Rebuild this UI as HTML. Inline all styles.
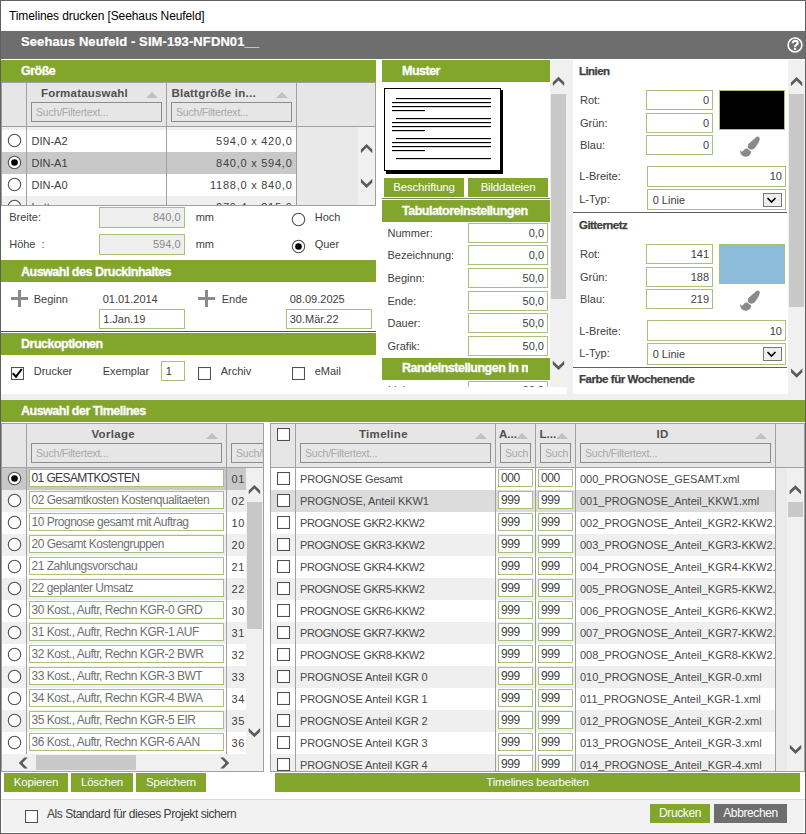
<!DOCTYPE html><html><head><meta charset="utf-8"><style>

html,body{margin:0;padding:0}
body{width:806px;height:834px;position:relative;overflow:hidden;background:#fff;font-family:"Liberation Sans",sans-serif;}
div,svg{position:absolute;box-sizing:content-box}
.x{white-space:nowrap}

</style></head><body>
<div class="x" style="left:9px;top:10px;font-size:12px;line-height:12px;letter-spacing:-0.1px;color:#000;">Timelines drucken [Seehaus Neufeld]</div>
<div style="left:1px;top:31px;width:804px;height:28px;background:#6e6e6e;"></div>
<div class="x" style="left:21px;top:35px;font-size:13px;line-height:13px;font-weight:bold;letter-spacing:0.1px;color:#fff;-webkit-text-stroke:0.2px #fff;">Seehaus Neufeld - SIM-193-NFDN01__</div>
<svg style="left:787px;top:37px" width="16" height="16"><circle cx="8" cy="8" r="6.9" fill="none" stroke="#fff" stroke-width="1.5"/><path d="M5.7 6.3 C5.7 4.6 6.8 3.9 8.1 3.9 C9.6 3.9 10.7 4.8 10.7 6 C10.7 7.3 9.7 7.7 9 8.2 C8.3 8.7 8 9.2 8 10.3" fill="none" stroke="#fff" stroke-width="2.1"/><rect x="6.9" y="11.1" width="2.2" height="1.8" fill="#fff"/></svg>
<div style="left:1px;top:60px;width:375px;height:22px;background:#82a62c;"></div>
<div class="x" style="left:21px;top:65px;font-size:12.5px;line-height:12.5px;font-weight:bold;letter-spacing:-0.5px;color:#fff;-webkit-text-stroke:0.3px #fff;">Größe</div>
<div style="left:2px;top:82px;width:374px;height:124px;background:#e9e9e9;"></div>
<div style="left:2px;top:82px;width:373px;height:44px;background:#e6e6e6;"></div>
<div style="left:1px;top:82px;width:375px;height:1px;background:#a0a0a0;"></div>
<div style="left:1px;top:82px;width:1px;height:124px;background:#a0a0a0;"></div>
<div style="left:1px;top:126px;width:375px;height:1px;background:#a0a0a0;"></div>
<div style="left:1px;top:205px;width:375px;height:1px;background:#a0a0a0;"></div>
<div style="left:375px;top:82px;width:1px;height:124px;background:#a0a0a0;"></div>
<div style="left:358px;top:127px;width:17px;height:78px;background:#f0f0f0;"></div>
<div style="left:2px;top:127px;width:294px;height:78px;overflow:hidden">
<div style="left:0;top:0px;width:294px;height:3px;background:#efefef"></div>
<div style="left:0;top:3px;width:294px;height:22px;background:#fff"></div>
<div class="x" style="left:29.5px;top:9px;font-size:11px;line-height:11px;color:#404040">DIN-A2</div>
<div class="x" style="right:3.5px;top:9px;font-size:11px;line-height:11px;color:#404040;letter-spacing:0.75px">594,0 x 420,0</div>
<svg style="left:5px;top:6px" width="15" height="15"><circle cx="7.5" cy="7.5" r="6.2" fill="#fff" stroke="#505050" stroke-width="1.1"/></svg>
<div style="left:0;top:25px;width:294px;height:22px;background:#c8c8c8"></div>
<div class="x" style="left:29.5px;top:31px;font-size:11px;line-height:11px;color:#404040">DIN-A1</div>
<div class="x" style="right:3.5px;top:31px;font-size:11px;line-height:11px;color:#404040;letter-spacing:0.75px">840,0 x 594,0</div>
<svg style="left:5px;top:28px" width="15" height="15"><circle cx="7.5" cy="7.5" r="6.2" fill="#fff" stroke="#505050" stroke-width="1.1"/><circle cx="7.5" cy="7.5" r="3.3" fill="#000"/></svg>
<div style="left:0;top:47px;width:294px;height:22px;background:#fff"></div>
<div class="x" style="left:29.5px;top:53px;font-size:11px;line-height:11px;color:#404040">DIN-A0</div>
<div class="x" style="right:3.5px;top:53px;font-size:11px;line-height:11px;color:#404040;letter-spacing:0.75px">1188,0 x 840,0</div>
<svg style="left:5px;top:50px" width="15" height="15"><circle cx="7.5" cy="7.5" r="6.2" fill="#fff" stroke="#505050" stroke-width="1.1"/></svg>
<div style="left:0;top:69px;width:294px;height:22px;background:#efefef"></div>
<div class="x" style="left:29.5px;top:75px;font-size:11px;line-height:11px;color:#404040">Letter</div>
<div class="x" style="right:3.5px;top:75px;font-size:11px;line-height:11px;color:#404040;letter-spacing:0.75px">279,4 x 215,9</div>
<svg style="left:5px;top:72px" width="15" height="15"><circle cx="7.5" cy="7.5" r="6.2" fill="#fff" stroke="#505050" stroke-width="1.1"/></svg>
</div>
<div style="left:26px;top:82px;width:1px;height:123px;background:#a0a0a0;"></div>
<div style="left:166px;top:82px;width:1px;height:123px;background:#a0a0a0;"></div>
<div style="left:296px;top:82px;width:1px;height:123px;background:#a0a0a0;"></div>
<div class="x" style="left:41px;top:88px;font-size:11.5px;line-height:11.5px;font-weight:bold;letter-spacing:0.2px;color:#505050;">Formatauswahl</div>
<svg style="left:146px;top:92px" width="12" height="6"><path d="M0 6 L6 0 L12 6 Z" fill="#c0c0c0"/></svg>
<div class="x" style="left:171.4px;top:88px;font-size:11.5px;line-height:11.5px;font-weight:bold;letter-spacing:0.25px;color:#505050;">Blattgröße in...</div>
<svg style="left:276px;top:92px" width="12" height="6"><path d="M0 6 L6 0 L12 6 Z" fill="#c0c0c0"/></svg>
<div style="left:31px;top:102px;width:129px;height:18px;border:1px solid #8c8c8c;background:#e6e6e6;overflow:hidden"><div class="x" style="left:4px;top:4px;font-size:10.5px;line-height:10.5px;color:#a8a8a8;letter-spacing:-0.2px">Such/Filtertext...</div></div>
<div style="left:171px;top:102px;width:119px;height:18px;border:1px solid #8c8c8c;background:#e6e6e6;overflow:hidden"><div class="x" style="left:4px;top:4px;font-size:10.5px;line-height:10.5px;color:#a8a8a8;letter-spacing:-0.2px">Such/Filtertext...</div></div>
<svg style="left:0;top:0" width="806" height="834"><polygon points="366.60,143.90 372.30,149.50 372.30,153.20 366.60,147.60 360.90,153.20 360.90,149.50" fill="#5a5a5a"/></svg>
<svg style="left:0;top:0" width="806" height="834"><polygon points="366.60,188.00 372.30,182.40 372.30,178.70 366.60,184.30 360.90,178.70 360.90,182.40" fill="#5a5a5a"/></svg>
<div class="x" style="left:9.2px;top:212px;font-size:11px;line-height:11px;color:#404040;">Breite:</div>
<div style="left:99px;top:207px;width:84px;height:19px;border:1px solid #a6c27a;background:#efefef;"></div>
<div class="x" style="right:625.5px;top:212px;font-size:11px;line-height:11px;color:#888;">840,0</div>
<div class="x" style="left:195.7px;top:212px;font-size:11px;line-height:11px;color:#404040;">mm</div>
<svg style="left:291px;top:212px" width="15" height="15"><circle cx="7.5" cy="7.5" r="6.2" fill="#fff" stroke="#505050" stroke-width="1.1"/></svg>
<div class="x" style="left:314.7px;top:212px;font-size:11px;line-height:11px;color:#404040;">Hoch</div>
<div class="x" style="left:9.2px;top:239px;font-size:11px;line-height:11px;color:#404040;">Höhe&nbsp; :</div>
<div style="left:99px;top:234px;width:84px;height:19px;border:1px solid #a6c27a;background:#efefef;"></div>
<div class="x" style="right:625.5px;top:239px;font-size:11px;line-height:11px;color:#888;">594,0</div>
<div class="x" style="left:195.7px;top:239px;font-size:11px;line-height:11px;color:#404040;">mm</div>
<svg style="left:291px;top:239px" width="15" height="15"><circle cx="7.5" cy="7.5" r="6.2" fill="#fff" stroke="#505050" stroke-width="1.1"/><circle cx="7.5" cy="7.5" r="3.3" fill="#000"/></svg>
<div class="x" style="left:314.7px;top:239px;font-size:11px;line-height:11px;color:#404040;">Quer</div>
<div style="left:1px;top:260px;width:375px;height:22px;background:#82a62c;"></div>
<div class="x" style="left:21px;top:266px;font-size:12.5px;line-height:12.5px;font-weight:bold;letter-spacing:-0.5px;color:#fff;-webkit-text-stroke:0.3px #fff;">Auswahl des Druckinhaltes</div>
<svg style="left:11px;top:290px" width="18" height="18"><rect x="0" y="7" width="17" height="3" fill="#8a8a8a"/><rect x="7" y="0" width="3" height="17" fill="#8a8a8a"/></svg>
<div class="x" style="left:33.7px;top:294px;font-size:11px;line-height:11px;color:#404040;">Beginn</div>
<div class="x" style="left:102.7px;top:294px;font-size:11px;line-height:11px;color:#404040;">01.01.2014</div>
<div style="left:99px;top:309px;width:84px;height:18px;border:1px solid #a6c27a;background:#fff;"></div>
<div class="x" style="left:103.2px;top:314px;font-size:11px;line-height:11px;color:#404040;">1.Jan.19</div>
<svg style="left:198px;top:290px" width="18" height="18"><rect x="0" y="7" width="17" height="3" fill="#8a8a8a"/><rect x="7" y="0" width="3" height="17" fill="#8a8a8a"/></svg>
<div class="x" style="left:221.7px;top:294px;font-size:11px;line-height:11px;color:#404040;">Ende</div>
<div class="x" style="left:289.7px;top:294px;font-size:11px;line-height:11px;color:#404040;">08.09.2025</div>
<div style="left:286px;top:309px;width:84px;height:18px;border:1px solid #a6c27a;background:#fff;"></div>
<div class="x" style="left:289.7px;top:314px;font-size:11px;line-height:11px;color:#404040;">30.Mär.22</div>
<div style="left:1px;top:331px;width:375px;height:1px;background:#505050;"></div>
<div style="left:1px;top:333px;width:375px;height:22px;background:#82a62c;"></div>
<div class="x" style="left:21px;top:338px;font-size:12.5px;line-height:12.5px;font-weight:bold;letter-spacing:-0.5px;color:#fff;-webkit-text-stroke:0.3px #fff;">Druckoptionen</div>
<svg style="left:11px;top:367px" width="13" height="13"><rect x="0.5" y="0.5" width="12" height="12" fill="#fff" stroke="#505050" stroke-width="1.1"/><path d="M1.8 6.2 L5 9.6 L10.8 2" fill="none" stroke="#000" stroke-width="2"/></svg>
<div class="x" style="left:33.7px;top:366px;font-size:11px;line-height:11px;color:#404040;">Drucker</div>
<div class="x" style="left:102.7px;top:366px;font-size:11px;line-height:11px;color:#404040;">Exemplar</div>
<div style="left:161px;top:361px;width:22px;height:18px;border:1px solid #a6c27a;background:#fff;"></div>
<div class="x" style="left:165.7px;top:366px;font-size:11px;line-height:11px;color:#404040;">1</div>
<svg style="left:198px;top:367px" width="13" height="13"><rect x="0.5" y="0.5" width="12" height="12" fill="#fff" stroke="#505050" stroke-width="1.1"/></svg>
<div class="x" style="left:220.7px;top:366px;font-size:11px;line-height:11px;color:#404040;">Archiv</div>
<svg style="left:292px;top:367px" width="13" height="13"><rect x="0.5" y="0.5" width="12" height="12" fill="#fff" stroke="#505050" stroke-width="1.1"/></svg>
<div class="x" style="left:314.7px;top:366px;font-size:11px;line-height:11px;color:#404040;">eMail</div>
<div style="left:382px;top:60px;width:168px;height:327px;background:#fff;"></div>
<div style="left:382px;top:60px;width:168px;height:22px;background:#82a62c;"></div>
<div class="x" style="left:402px;top:65px;font-size:12.5px;line-height:12.5px;font-weight:bold;letter-spacing:-0.5px;color:#fff;-webkit-text-stroke:0.3px #fff;">Muster</div>
<svg style="left:384px;top:88px" width="120" height="86"><rect x="2" y="2" width="117" height="84" fill="#000"/><rect x="0.5" y="0.5" width="116" height="82" fill="#fff" stroke="#000"/><rect x="12" y="10" width="95" height="1.15" fill="#000"/><rect x="8" y="14" width="99" height="1.15" fill="#000"/><rect x="8" y="18" width="99" height="1.15" fill="#000"/><rect x="8" y="22" width="33" height="1.15" fill="#000"/><rect x="12" y="30" width="95" height="1.15" fill="#000"/><rect x="8" y="34" width="99" height="1.15" fill="#000"/><rect x="8" y="38" width="99" height="1.15" fill="#000"/><rect x="8" y="42" width="33" height="1.15" fill="#000"/><rect x="12" y="50" width="95" height="1.15" fill="#000"/><rect x="8" y="54" width="99" height="1.15" fill="#000"/><rect x="8" y="58" width="99" height="1.15" fill="#000"/><rect x="8" y="62" width="33" height="1.15" fill="#000"/><rect x="12" y="70" width="95" height="1.15" fill="#000"/></svg>
<div style="left:384px;top:178px;width:80px;height:19px;background:#82a62c"></div>
<div class="x" style="left:384px;width:80px;text-align:center;top:182px;font-size:11.5px;line-height:11.5px;color:#fff;letter-spacing:-0.2px">Beschriftung</div>
<div style="left:468px;top:178px;width:80px;height:19px;background:#82a62c"></div>
<div class="x" style="left:468px;width:80px;text-align:center;top:182px;font-size:11.5px;line-height:11.5px;color:#fff;letter-spacing:-0.2px">Bilddateien</div>
<div style="left:382px;top:198px;width:168px;height:1px;background:#808080;"></div>
<div style="left:382px;top:200px;width:168px;height:22px;background:#82a62c;overflow:hidden"></div>
<div class="x" style="left:402px;top:205px;font-size:12.5px;line-height:12.5px;font-weight:bold;letter-spacing:-0.5px;color:#fff;-webkit-text-stroke:0.3px #fff;">Tabulatoreinstellungen</div>
<div class="x" style="left:387.5px;top:228px;font-size:11px;line-height:11px;color:#404040;">Nummer:</div>
<div style="left:468px;top:223px;width:78px;height:18px;border:1px solid #a6c27a;background:#fff;"></div>
<div class="x" style="right:262px;top:228px;font-size:11px;line-height:11px;color:#404040;">0,0</div>
<div class="x" style="left:387.5px;top:250px;font-size:11px;line-height:11px;color:#404040;">Bezeichnung:</div>
<div style="left:468px;top:245px;width:78px;height:18px;border:1px solid #a6c27a;background:#fff;"></div>
<div class="x" style="right:262px;top:250px;font-size:11px;line-height:11px;color:#404040;">0,0</div>
<div class="x" style="left:387.5px;top:273px;font-size:11px;line-height:11px;color:#404040;">Beginn:</div>
<div style="left:468px;top:268px;width:78px;height:18px;border:1px solid #a6c27a;background:#fff;"></div>
<div class="x" style="right:262px;top:273px;font-size:11px;line-height:11px;color:#404040;">50,0</div>
<div class="x" style="left:387.5px;top:296px;font-size:11px;line-height:11px;color:#404040;">Ende:</div>
<div style="left:468px;top:291px;width:78px;height:18px;border:1px solid #a6c27a;background:#fff;"></div>
<div class="x" style="right:262px;top:296px;font-size:11px;line-height:11px;color:#404040;">50,0</div>
<div class="x" style="left:387.5px;top:318px;font-size:11px;line-height:11px;color:#404040;">Dauer:</div>
<div style="left:468px;top:313px;width:78px;height:18px;border:1px solid #a6c27a;background:#fff;"></div>
<div class="x" style="right:262px;top:318px;font-size:11px;line-height:11px;color:#404040;">50,0</div>
<div class="x" style="left:387.5px;top:341px;font-size:11px;line-height:11px;color:#404040;">Grafik:</div>
<div style="left:468px;top:336px;width:78px;height:18px;border:1px solid #a6c27a;background:#fff;"></div>
<div class="x" style="right:262px;top:341px;font-size:11px;line-height:11px;color:#404040;">50,0</div>
<div style="left:382px;top:358px;width:168px;height:22px;background:#82a62c;overflow:hidden"><div class="x" style="left:20px;top:4px;width:126px;overflow:hidden;font-size:12.5px;line-height:12.5px;font-weight:bold;color:#fff;letter-spacing:-0.5px;-webkit-text-stroke:0.3px #fff">Randeinstellungen in mm</div></div>
<div style="left:382px;top:381px;width:168px;height:6px;overflow:hidden"><div style="left:86px;top:0;width:78px;height:18px;border:1px solid #a6c27a;background:#fff"></div><div class="x" style="left:6px;top:4px;font-size:11px;line-height:11px;color:#404040">Links:</div><div class="x" style="right:6px;top:4px;font-size:11px;line-height:11px;color:#404040">20,0</div></div>
<div style="left:550px;top:60px;width:23px;height:334px;background:#f0f0f0;"></div>
<div style="left:382px;top:387px;width:185px;height:7px;background:#fff;"></div>
<div style="left:551px;top:94px;width:15px;height:205px;background:#c8c8c8;"></div>
<svg style="left:0;top:0" width="806" height="834"><polygon points="558.50,76.70 564.20,82.30 564.20,86.00 558.50,80.40 552.80,86.00 552.80,82.30" fill="#5a5a5a"/></svg>
<svg style="left:0;top:0" width="806" height="834"><polygon points="558.50,370.00 564.20,364.40 564.20,360.70 558.50,366.30 552.80,360.70 552.80,364.40" fill="#5a5a5a"/></svg>
<div style="left:573px;top:60px;width:215px;height:334px;background:#fff;"></div>
<div class="x" style="left:579px;top:66px;font-size:11.5px;line-height:11.5px;font-weight:bold;letter-spacing:-0.55px;color:#404040;-webkit-text-stroke:0.25px #404040;">Linien</div>
<div class="x" style="left:580px;top:95px;font-size:11px;line-height:11px;color:#404040;">Rot:</div>
<div style="left:646px;top:90px;width:65px;height:18px;border:1px solid #a6c27a;background:#fff;"></div>
<div class="x" style="right:97px;top:95px;font-size:11px;line-height:11px;color:#404040;">0</div>
<div class="x" style="left:580px;top:118px;font-size:11px;line-height:11px;color:#404040;">Grün:</div>
<div style="left:646px;top:113px;width:65px;height:18px;border:1px solid #a6c27a;background:#fff;"></div>
<div class="x" style="right:97px;top:118px;font-size:11px;line-height:11px;color:#404040;">0</div>
<div class="x" style="left:580px;top:140px;font-size:11px;line-height:11px;color:#404040;">Blau:</div>
<div style="left:646px;top:135px;width:65px;height:18px;border:1px solid #a6c27a;background:#fff;"></div>
<div class="x" style="right:97px;top:140px;font-size:11px;line-height:11px;color:#404040;">0</div>
<div style="left:719px;top:90px;width:64px;height:38px;border:1px solid #a6c27a;background:#000"></div>
<svg style="left:735px;top:132px" width="30" height="30" viewBox="0 0 30 30"><g fill="#8a8a8a"><path d="M21.3 5.0 C22.5 3.9 24.6 4.3 24.8 6.6 C24.9 9.0 21.5 14.5 19.5 16.5 C17.8 18.2 14.5 18.0 13.2 16.0 C12.3 14.5 12.8 12.5 14.2 11.3 Z"/><path d="M5.0 18.0 C5.8 19.7 7.2 20.0 8.3 18.7 C9.3 17.3 10.6 16.4 12.2 16.5 C13.0 16.6 13.4 17.3 13.9 17.9 C14.5 18.6 15.3 19.0 16.1 19.1 C16.3 21.8 14.6 24.6 11.2 24.7 C7.6 24.8 5.0 22.3 5.0 18.0 Z"/></g></svg>
<div class="x" style="left:579.2px;top:171px;font-size:11px;line-height:11px;color:#404040;">L-Breite:</div>
<div style="left:647px;top:166px;width:137px;height:19px;border:1px solid #a6c27a;background:#fff;"></div>
<div class="x" style="right:24px;top:171px;font-size:11px;line-height:11px;color:#404040;">10</div>
<div class="x" style="left:579.2px;top:194px;font-size:11px;line-height:11px;color:#404040;">L-Typ:</div>
<div style="left:647px;top:189px;width:137px;height:19px;border:1px solid #a6c27a;background:#fff;"></div>
<div class="x" style="left:652.7px;top:195px;font-size:11px;line-height:11px;color:#404040;">0 Linie</div>
<div style="left:763px;top:193px;width:17px;height:12px;border:1px solid #777;background:#efefef"></div><svg style="left:766px;top:197px" width="11" height="7"><path d="M1.5 1 L5.5 5 L9.5 1" fill="none" stroke="#000" stroke-width="1.6"/></svg>
<div style="left:573px;top:212px;width:214px;height:1px;background:#606060;"></div>
<div class="x" style="left:579px;top:220px;font-size:11.5px;line-height:11.5px;font-weight:bold;letter-spacing:-0.55px;color:#404040;-webkit-text-stroke:0.25px #404040;">Gitternetz</div>
<div class="x" style="left:580px;top:249px;font-size:11px;line-height:11px;color:#404040;">Rot:</div>
<div style="left:646px;top:244px;width:65px;height:18px;border:1px solid #a6c27a;background:#fff;"></div>
<div class="x" style="right:97px;top:249px;font-size:11px;line-height:11px;color:#404040;">141</div>
<div class="x" style="left:580px;top:272px;font-size:11px;line-height:11px;color:#404040;">Grün:</div>
<div style="left:646px;top:267px;width:65px;height:18px;border:1px solid #a6c27a;background:#fff;"></div>
<div class="x" style="right:97px;top:272px;font-size:11px;line-height:11px;color:#404040;">188</div>
<div class="x" style="left:580px;top:294px;font-size:11px;line-height:11px;color:#404040;">Blau:</div>
<div style="left:646px;top:289px;width:65px;height:18px;border:1px solid #a6c27a;background:#fff;"></div>
<div class="x" style="right:97px;top:294px;font-size:11px;line-height:11px;color:#404040;">219</div>
<div style="left:719px;top:244px;width:64px;height:38px;border:1px solid #a6c27a;background:#8dbcdb"></div>
<svg style="left:735px;top:286px" width="30" height="30" viewBox="0 0 30 30"><g fill="#8a8a8a"><path d="M21.3 5.0 C22.5 3.9 24.6 4.3 24.8 6.6 C24.9 9.0 21.5 14.5 19.5 16.5 C17.8 18.2 14.5 18.0 13.2 16.0 C12.3 14.5 12.8 12.5 14.2 11.3 Z"/><path d="M5.0 18.0 C5.8 19.7 7.2 20.0 8.3 18.7 C9.3 17.3 10.6 16.4 12.2 16.5 C13.0 16.6 13.4 17.3 13.9 17.9 C14.5 18.6 15.3 19.0 16.1 19.1 C16.3 21.8 14.6 24.6 11.2 24.7 C7.6 24.8 5.0 22.3 5.0 18.0 Z"/></g></svg>
<div class="x" style="left:579.2px;top:326px;font-size:11px;line-height:11px;color:#404040;">L-Breite:</div>
<div style="left:647px;top:320px;width:137px;height:19px;border:1px solid #a6c27a;background:#fff;"></div>
<div class="x" style="right:24px;top:326px;font-size:11px;line-height:11px;color:#404040;">10</div>
<div class="x" style="left:579.2px;top:348px;font-size:11px;line-height:11px;color:#404040;">L-Typ:</div>
<div style="left:647px;top:343px;width:137px;height:20px;border:1px solid #a6c27a;background:#fff;"></div>
<div class="x" style="left:652.7px;top:349px;font-size:11px;line-height:11px;color:#404040;">0 Linie</div>
<div style="left:763px;top:347px;width:17px;height:12px;border:1px solid #777;background:#efefef"></div><svg style="left:766px;top:351px" width="11" height="7"><path d="M1.5 1 L5.5 5 L9.5 1" fill="none" stroke="#000" stroke-width="1.6"/></svg>
<div style="left:573px;top:367px;width:214px;height:1px;background:#606060;"></div>
<div class="x" style="left:579px;top:374px;font-size:11.5px;line-height:11.5px;font-weight:bold;letter-spacing:-0.45px;color:#404040;-webkit-text-stroke:0.25px #404040;">Farbe für Wochenende</div>
<div style="left:788px;top:60px;width:17px;height:334px;background:#f0f0f0;"></div>
<div style="left:789px;top:94px;width:15px;height:213px;background:#c8c8c8;"></div>
<svg style="left:0;top:0" width="806" height="834"><polygon points="796.60,77.00 802.30,82.60 802.30,86.30 796.60,80.70 790.90,86.30 790.90,82.60" fill="#5a5a5a"/></svg>
<svg style="left:0;top:0" width="806" height="834"><polygon points="796.70,377.80 802.40,372.20 802.40,368.50 796.70,374.10 791.00,368.50 791.00,372.20" fill="#5a5a5a"/></svg>
<div style="left:1px;top:394px;width:804px;height:6px;background:#f0f0f0;"></div>
<div style="left:1px;top:400px;width:804px;height:22px;background:#82a62c;"></div>
<div class="x" style="left:21px;top:405px;font-size:12.5px;line-height:12.5px;font-weight:bold;letter-spacing:-0.5px;color:#fff;-webkit-text-stroke:0.3px #fff;">Auswahl der Timelines</div>
<div style="left:2px;top:423px;width:262px;height:349px;background:#f0f0f0;"></div>
<div style="left:2px;top:423px;width:261px;height:44px;background:#e6e6e6;"></div>
<div style="left:1px;top:423px;width:263px;height:1px;background:#a0a0a0;"></div>
<div style="left:1px;top:467px;width:262px;height:1px;background:#a0a0a0;"></div>
<div style="left:263px;top:423px;width:1px;height:349px;background:#a0a0a0;"></div>
<div style="left:1px;top:771px;width:263px;height:1px;background:#a0a0a0;"></div>
<div style="left:1px;top:423px;width:1px;height:349px;background:#a0a0a0;"></div>
<div style="left:2px;top:468px;width:24px;height:22px;background:#c8c8c8;"></div>
<div style="left:27px;top:468px;width:199px;height:22px;background:#c8c8c8;"></div>
<div style="left:227px;top:468px;width:19px;height:22px;background:#c8c8c8;"></div>
<svg style="left:7px;top:471px" width="15" height="15"><circle cx="7.5" cy="7.5" r="6.2" fill="#fff" stroke="#505050" stroke-width="1.1"/><circle cx="7.5" cy="7.5" r="3.3" fill="#000"/></svg>
<div style="left:29px;top:469px;width:193px;height:16px;border:1px solid #a6c27a;background:#fff;"></div>
<div class="x" style="left:31.5px;top:472px;font-size:12px;line-height:12px;letter-spacing:-0.6px;color:#383838;">01 GESAMTKOSTEN</div>
<div class="x" style="left:231.5px;top:474px;font-size:11px;line-height:11px;letter-spacing:0.7px;color:#404040;">01</div>
<div style="left:2px;top:490px;width:24px;height:22px;background:#efefef;"></div>
<div style="left:27px;top:490px;width:199px;height:22px;background:#efefef;"></div>
<div style="left:227px;top:490px;width:19px;height:22px;background:#efefef;"></div>
<svg style="left:7px;top:493px" width="15" height="15"><circle cx="7.5" cy="7.5" r="6.2" fill="#fff" stroke="#505050" stroke-width="1.1"/></svg>
<div style="left:29px;top:491px;width:193px;height:16px;border:1px solid #a6c27a;background:#fff;"></div>
<div class="x" style="left:31.5px;top:494px;font-size:12px;line-height:12px;letter-spacing:-0.48px;color:#707070;">02 Gesamtkosten Kostenqualitaeten</div>
<div class="x" style="left:231.5px;top:496px;font-size:11px;line-height:11px;letter-spacing:0.7px;color:#404040;">02</div>
<div style="left:2px;top:512px;width:24px;height:22px;background:#fff;"></div>
<div style="left:27px;top:512px;width:199px;height:22px;background:#fff;"></div>
<div style="left:227px;top:512px;width:19px;height:22px;background:#fff;"></div>
<svg style="left:7px;top:515px" width="15" height="15"><circle cx="7.5" cy="7.5" r="6.2" fill="#fff" stroke="#505050" stroke-width="1.1"/></svg>
<div style="left:29px;top:513px;width:193px;height:16px;border:1px solid #a6c27a;background:#fff;"></div>
<div class="x" style="left:31.5px;top:516px;font-size:12px;line-height:12px;letter-spacing:-0.48px;color:#707070;">10 Prognose gesamt mit Auftrag</div>
<div class="x" style="left:231.5px;top:518px;font-size:11px;line-height:11px;letter-spacing:0.7px;color:#404040;">10</div>
<div style="left:2px;top:534px;width:24px;height:22px;background:#efefef;"></div>
<div style="left:27px;top:534px;width:199px;height:22px;background:#efefef;"></div>
<div style="left:227px;top:534px;width:19px;height:22px;background:#efefef;"></div>
<svg style="left:7px;top:537px" width="15" height="15"><circle cx="7.5" cy="7.5" r="6.2" fill="#fff" stroke="#505050" stroke-width="1.1"/></svg>
<div style="left:29px;top:535px;width:193px;height:16px;border:1px solid #a6c27a;background:#fff;"></div>
<div class="x" style="left:31.5px;top:538px;font-size:12px;line-height:12px;letter-spacing:-0.48px;color:#707070;">20 Gesamt Kostengruppen</div>
<div class="x" style="left:231.5px;top:540px;font-size:11px;line-height:11px;letter-spacing:0.7px;color:#404040;">20</div>
<div style="left:2px;top:556px;width:24px;height:22px;background:#fff;"></div>
<div style="left:27px;top:556px;width:199px;height:22px;background:#fff;"></div>
<div style="left:227px;top:556px;width:19px;height:22px;background:#fff;"></div>
<svg style="left:7px;top:559px" width="15" height="15"><circle cx="7.5" cy="7.5" r="6.2" fill="#fff" stroke="#505050" stroke-width="1.1"/></svg>
<div style="left:29px;top:557px;width:193px;height:16px;border:1px solid #a6c27a;background:#fff;"></div>
<div class="x" style="left:31.5px;top:560px;font-size:12px;line-height:12px;letter-spacing:-0.48px;color:#707070;">21 Zahlungsvorschau</div>
<div class="x" style="left:231.5px;top:562px;font-size:11px;line-height:11px;letter-spacing:0.7px;color:#404040;">21</div>
<div style="left:2px;top:578px;width:24px;height:22px;background:#efefef;"></div>
<div style="left:27px;top:578px;width:199px;height:22px;background:#efefef;"></div>
<div style="left:227px;top:578px;width:19px;height:22px;background:#efefef;"></div>
<svg style="left:7px;top:581px" width="15" height="15"><circle cx="7.5" cy="7.5" r="6.2" fill="#fff" stroke="#505050" stroke-width="1.1"/></svg>
<div style="left:29px;top:579px;width:193px;height:16px;border:1px solid #a6c27a;background:#fff;"></div>
<div class="x" style="left:31.5px;top:582px;font-size:12px;line-height:12px;letter-spacing:-0.48px;color:#707070;">22 geplanter Umsatz</div>
<div class="x" style="left:231.5px;top:584px;font-size:11px;line-height:11px;letter-spacing:0.7px;color:#404040;">22</div>
<div style="left:2px;top:600px;width:24px;height:22px;background:#fff;"></div>
<div style="left:27px;top:600px;width:199px;height:22px;background:#fff;"></div>
<div style="left:227px;top:600px;width:19px;height:22px;background:#fff;"></div>
<svg style="left:7px;top:603px" width="15" height="15"><circle cx="7.5" cy="7.5" r="6.2" fill="#fff" stroke="#505050" stroke-width="1.1"/></svg>
<div style="left:29px;top:601px;width:193px;height:16px;border:1px solid #a6c27a;background:#fff;"></div>
<div class="x" style="left:31.5px;top:604px;font-size:12px;line-height:12px;letter-spacing:-0.48px;color:#707070;">30 Kost., Auftr, Rechn KGR-0 GRD</div>
<div class="x" style="left:231.5px;top:606px;font-size:11px;line-height:11px;letter-spacing:0.7px;color:#404040;">30</div>
<div style="left:2px;top:622px;width:24px;height:22px;background:#efefef;"></div>
<div style="left:27px;top:622px;width:199px;height:22px;background:#efefef;"></div>
<div style="left:227px;top:622px;width:19px;height:22px;background:#efefef;"></div>
<svg style="left:7px;top:625px" width="15" height="15"><circle cx="7.5" cy="7.5" r="6.2" fill="#fff" stroke="#505050" stroke-width="1.1"/></svg>
<div style="left:29px;top:623px;width:193px;height:16px;border:1px solid #a6c27a;background:#fff;"></div>
<div class="x" style="left:31.5px;top:626px;font-size:12px;line-height:12px;letter-spacing:-0.48px;color:#707070;">31 Kost., Auftr, Rechn KGR-1 AUF</div>
<div class="x" style="left:231.5px;top:628px;font-size:11px;line-height:11px;letter-spacing:0.7px;color:#404040;">31</div>
<div style="left:2px;top:644px;width:24px;height:22px;background:#fff;"></div>
<div style="left:27px;top:644px;width:199px;height:22px;background:#fff;"></div>
<div style="left:227px;top:644px;width:19px;height:22px;background:#fff;"></div>
<svg style="left:7px;top:647px" width="15" height="15"><circle cx="7.5" cy="7.5" r="6.2" fill="#fff" stroke="#505050" stroke-width="1.1"/></svg>
<div style="left:29px;top:645px;width:193px;height:16px;border:1px solid #a6c27a;background:#fff;"></div>
<div class="x" style="left:31.5px;top:648px;font-size:12px;line-height:12px;letter-spacing:-0.48px;color:#707070;">32 Kost., Auftr, Rechn KGR-2 BWR</div>
<div class="x" style="left:231.5px;top:650px;font-size:11px;line-height:11px;letter-spacing:0.7px;color:#404040;">32</div>
<div style="left:2px;top:666px;width:24px;height:22px;background:#efefef;"></div>
<div style="left:27px;top:666px;width:199px;height:22px;background:#efefef;"></div>
<div style="left:227px;top:666px;width:19px;height:22px;background:#efefef;"></div>
<svg style="left:7px;top:669px" width="15" height="15"><circle cx="7.5" cy="7.5" r="6.2" fill="#fff" stroke="#505050" stroke-width="1.1"/></svg>
<div style="left:29px;top:667px;width:193px;height:16px;border:1px solid #a6c27a;background:#fff;"></div>
<div class="x" style="left:31.5px;top:670px;font-size:12px;line-height:12px;letter-spacing:-0.48px;color:#707070;">33 Kost., Auftr, Rechn KGR-3 BWT</div>
<div class="x" style="left:231.5px;top:672px;font-size:11px;line-height:11px;letter-spacing:0.7px;color:#404040;">33</div>
<div style="left:2px;top:688px;width:24px;height:22px;background:#fff;"></div>
<div style="left:27px;top:688px;width:199px;height:22px;background:#fff;"></div>
<div style="left:227px;top:688px;width:19px;height:22px;background:#fff;"></div>
<svg style="left:7px;top:691px" width="15" height="15"><circle cx="7.5" cy="7.5" r="6.2" fill="#fff" stroke="#505050" stroke-width="1.1"/></svg>
<div style="left:29px;top:689px;width:193px;height:16px;border:1px solid #a6c27a;background:#fff;"></div>
<div class="x" style="left:31.5px;top:692px;font-size:12px;line-height:12px;letter-spacing:-0.48px;color:#707070;">34 Kost., Auftr, Rechn KGR-4 BWA</div>
<div class="x" style="left:231.5px;top:694px;font-size:11px;line-height:11px;letter-spacing:0.7px;color:#404040;">34</div>
<div style="left:2px;top:710px;width:24px;height:22px;background:#efefef;"></div>
<div style="left:27px;top:710px;width:199px;height:22px;background:#efefef;"></div>
<div style="left:227px;top:710px;width:19px;height:22px;background:#efefef;"></div>
<svg style="left:7px;top:713px" width="15" height="15"><circle cx="7.5" cy="7.5" r="6.2" fill="#fff" stroke="#505050" stroke-width="1.1"/></svg>
<div style="left:29px;top:711px;width:193px;height:16px;border:1px solid #a6c27a;background:#fff;"></div>
<div class="x" style="left:31.5px;top:714px;font-size:12px;line-height:12px;letter-spacing:-0.48px;color:#707070;">35 Kost., Auftr, Rechn KGR-5 EIR</div>
<div class="x" style="left:231.5px;top:716px;font-size:11px;line-height:11px;letter-spacing:0.7px;color:#404040;">35</div>
<div style="left:2px;top:732px;width:24px;height:22px;background:#fff;"></div>
<div style="left:27px;top:732px;width:199px;height:22px;background:#fff;"></div>
<div style="left:227px;top:732px;width:19px;height:22px;background:#fff;"></div>
<svg style="left:7px;top:735px" width="15" height="15"><circle cx="7.5" cy="7.5" r="6.2" fill="#fff" stroke="#505050" stroke-width="1.1"/></svg>
<div style="left:29px;top:733px;width:193px;height:16px;border:1px solid #a6c27a;background:#fff;"></div>
<div class="x" style="left:31.5px;top:736px;font-size:12px;line-height:12px;letter-spacing:-0.48px;color:#707070;">36 Kost., Auftr, Rechn KGR-6 AAN</div>
<div class="x" style="left:231.5px;top:738px;font-size:11px;line-height:11px;letter-spacing:0.7px;color:#404040;">36</div>
<div style="left:26px;top:423px;width:1px;height:331px;background:#a0a0a0;"></div>
<div style="left:226px;top:423px;width:1px;height:331px;background:#a0a0a0;"></div>
<div class="x" style="left:91.5px;top:429px;font-size:11.5px;line-height:11.5px;font-weight:bold;letter-spacing:0.3px;color:#505050;">Vorlage</div>
<svg style="left:206px;top:433px" width="12" height="6"><path d="M0 6 L6 0 L12 6 Z" fill="#c0c0c0"/></svg>
<div style="left:31px;top:443px;width:189px;height:18px;border:1px solid #8c8c8c;background:#e6e6e6;overflow:hidden"><div class="x" style="left:4px;top:4px;font-size:10.5px;line-height:10.5px;color:#a8a8a8;letter-spacing:-0.2px">Such/Filtertext...</div></div>
<div style="left:231px;top:443px;width:32px;height:20px;overflow:hidden"><div style="left:0;top:0;width:50px;height:18px;border:1px solid #8c8c8c;background:#e6e6e6"><div class="x" style="left:4px;top:4px;font-size:10.5px;line-height:10.5px;color:#a8a8a8;letter-spacing:-0.2px">Such/Filtertext...</div></div></div>
<div style="left:247px;top:502px;width:15px;height:127px;background:#c8c8c8;"></div>
<svg style="left:0;top:0" width="806" height="834"><polygon points="254.40,484.90 260.10,490.50 260.10,494.20 254.40,488.60 248.70,494.20 248.70,490.50" fill="#5a5a5a"/></svg>
<svg style="left:0;top:0" width="806" height="834"><polygon points="254.40,737.30 260.10,731.70 260.10,728.00 254.40,733.60 248.70,728.00 248.70,731.70" fill="#5a5a5a"/></svg>
<div style="left:36px;top:755px;width:100px;height:15px;background:#c8c8c8;"></div>
<svg style="left:0;top:0" width="806" height="834"><polygon points="18.80,763.00 24.30,757.40 27.80,757.40 22.40,763.00 27.80,768.60 24.30,768.60" fill="#5a5a5a"/></svg>
<svg style="left:0;top:0" width="806" height="834"><polygon points="229.20,763.00 223.70,757.40 220.20,757.40 225.60,763.00 220.20,768.60 223.70,768.60" fill="#5a5a5a"/></svg>
<div style="left:270px;top:423px;width:535px;height:349px;background:#f0f0f0;"></div>
<div style="left:270px;top:423px;width:535px;height:44px;background:#e6e6e6;"></div>
<div style="left:270px;top:423px;width:535px;height:1px;background:#a0a0a0;"></div>
<div style="left:270px;top:467px;width:535px;height:1px;background:#a0a0a0;"></div>
<div style="left:270px;top:423px;width:1px;height:349px;background:#a0a0a0;"></div>
<div style="left:270px;top:771px;width:535px;height:1px;background:#a0a0a0;"></div>
<div style="left:271px;top:468px;width:505px;height:303px;overflow:hidden">
<div style="left:0;top:0px;width:505px;height:22px;background:#fff"></div>
<svg style="left:6px;top:4px" width="13" height="13"><rect x="0.5" y="0.5" width="12" height="12" fill="#fff" stroke="#505050" stroke-width="1.1"/></svg>
<div class="x" style="left:29px;top:6px;font-size:11px;line-height:11px;color:#484848;letter-spacing:-0.18px">PROGNOSE Gesamt</div>
<div style="left:227px;top:1px;width:33px;height:16px;border:1px solid #a6c27a;background:#fff"><div class="x" style="left:2px;top:2px;font-size:12px;line-height:12px;color:#404040;letter-spacing:-0.45px">000</div></div>
<div style="left:267px;top:1px;width:33px;height:16px;border:1px solid #a6c27a;background:#fff"><div class="x" style="left:2px;top:2px;font-size:12px;line-height:12px;color:#404040;letter-spacing:-0.45px">000</div></div>
<div style="left:305px;top:0px;width:199px;height:22px;overflow:hidden"><div class="x" style="left:4px;top:6px;font-size:11px;line-height:11px;color:#484848;letter-spacing:0px">000_PROGNOSE_GESAMT.xml</div></div>
<div style="left:0;top:22px;width:505px;height:22px;background:#dcdcdc"></div>
<svg style="left:6px;top:26px" width="13" height="13"><rect x="0.5" y="0.5" width="12" height="12" fill="#fff" stroke="#505050" stroke-width="1.1"/></svg>
<div class="x" style="left:29px;top:28px;font-size:11px;line-height:11px;color:#484848;letter-spacing:-0.1px">PROGNOSE, Anteil KKW1</div>
<div style="left:227px;top:23px;width:33px;height:16px;border:1px solid #a6c27a;background:#fff"><div class="x" style="left:2px;top:2px;font-size:12px;line-height:12px;color:#404040;letter-spacing:-0.45px">999</div></div>
<div style="left:267px;top:23px;width:33px;height:16px;border:1px solid #a6c27a;background:#fff"><div class="x" style="left:2px;top:2px;font-size:12px;line-height:12px;color:#404040;letter-spacing:-0.45px">999</div></div>
<div style="left:305px;top:22px;width:199px;height:22px;overflow:hidden"><div class="x" style="left:4px;top:6px;font-size:11px;line-height:11px;color:#484848;letter-spacing:0px">001_PROGNOSE_Anteil_KKW1.xml</div></div>
<div style="left:0;top:44px;width:505px;height:22px;background:#fff"></div>
<svg style="left:6px;top:48px" width="13" height="13"><rect x="0.5" y="0.5" width="12" height="12" fill="#fff" stroke="#505050" stroke-width="1.1"/></svg>
<div class="x" style="left:29px;top:50px;font-size:11px;line-height:11px;color:#484848;letter-spacing:-0.38px">PROGNOSE GKR2-KKW2</div>
<div style="left:227px;top:45px;width:33px;height:16px;border:1px solid #a6c27a;background:#fff"><div class="x" style="left:2px;top:2px;font-size:12px;line-height:12px;color:#404040;letter-spacing:-0.45px">999</div></div>
<div style="left:267px;top:45px;width:33px;height:16px;border:1px solid #a6c27a;background:#fff"><div class="x" style="left:2px;top:2px;font-size:12px;line-height:12px;color:#404040;letter-spacing:-0.45px">999</div></div>
<div style="left:305px;top:44px;width:199px;height:22px;overflow:hidden"><div class="x" style="left:4px;top:6px;font-size:11px;line-height:11px;color:#484848;letter-spacing:0px">002_PROGNOSE_Anteil_KGR2-KKW2.xml</div></div>
<div style="left:0;top:66px;width:505px;height:22px;background:#efefef"></div>
<svg style="left:6px;top:70px" width="13" height="13"><rect x="0.5" y="0.5" width="12" height="12" fill="#fff" stroke="#505050" stroke-width="1.1"/></svg>
<div class="x" style="left:29px;top:72px;font-size:11px;line-height:11px;color:#484848;letter-spacing:-0.38px">PROGNOSE GKR3-KKW2</div>
<div style="left:227px;top:67px;width:33px;height:16px;border:1px solid #a6c27a;background:#fff"><div class="x" style="left:2px;top:2px;font-size:12px;line-height:12px;color:#404040;letter-spacing:-0.45px">999</div></div>
<div style="left:267px;top:67px;width:33px;height:16px;border:1px solid #a6c27a;background:#fff"><div class="x" style="left:2px;top:2px;font-size:12px;line-height:12px;color:#404040;letter-spacing:-0.45px">999</div></div>
<div style="left:305px;top:66px;width:199px;height:22px;overflow:hidden"><div class="x" style="left:4px;top:6px;font-size:11px;line-height:11px;color:#484848;letter-spacing:0px">003_PROGNOSE_Anteil_KGR3-KKW2.xml</div></div>
<div style="left:0;top:88px;width:505px;height:22px;background:#fff"></div>
<svg style="left:6px;top:92px" width="13" height="13"><rect x="0.5" y="0.5" width="12" height="12" fill="#fff" stroke="#505050" stroke-width="1.1"/></svg>
<div class="x" style="left:29px;top:94px;font-size:11px;line-height:11px;color:#484848;letter-spacing:-0.38px">PROGNOSE GKR4-KKW2</div>
<div style="left:227px;top:89px;width:33px;height:16px;border:1px solid #a6c27a;background:#fff"><div class="x" style="left:2px;top:2px;font-size:12px;line-height:12px;color:#404040;letter-spacing:-0.45px">999</div></div>
<div style="left:267px;top:89px;width:33px;height:16px;border:1px solid #a6c27a;background:#fff"><div class="x" style="left:2px;top:2px;font-size:12px;line-height:12px;color:#404040;letter-spacing:-0.45px">999</div></div>
<div style="left:305px;top:88px;width:199px;height:22px;overflow:hidden"><div class="x" style="left:4px;top:6px;font-size:11px;line-height:11px;color:#484848;letter-spacing:0px">004_PROGNOSE_Anteil_KGR4-KKW2.xml</div></div>
<div style="left:0;top:110px;width:505px;height:22px;background:#efefef"></div>
<svg style="left:6px;top:114px" width="13" height="13"><rect x="0.5" y="0.5" width="12" height="12" fill="#fff" stroke="#505050" stroke-width="1.1"/></svg>
<div class="x" style="left:29px;top:116px;font-size:11px;line-height:11px;color:#484848;letter-spacing:-0.38px">PROGNOSE GKR5-KKW2</div>
<div style="left:227px;top:111px;width:33px;height:16px;border:1px solid #a6c27a;background:#fff"><div class="x" style="left:2px;top:2px;font-size:12px;line-height:12px;color:#404040;letter-spacing:-0.45px">999</div></div>
<div style="left:267px;top:111px;width:33px;height:16px;border:1px solid #a6c27a;background:#fff"><div class="x" style="left:2px;top:2px;font-size:12px;line-height:12px;color:#404040;letter-spacing:-0.45px">999</div></div>
<div style="left:305px;top:110px;width:199px;height:22px;overflow:hidden"><div class="x" style="left:4px;top:6px;font-size:11px;line-height:11px;color:#484848;letter-spacing:0px">005_PROGNOSE_Anteil_KGR5-KKW2.xml</div></div>
<div style="left:0;top:132px;width:505px;height:22px;background:#fff"></div>
<svg style="left:6px;top:136px" width="13" height="13"><rect x="0.5" y="0.5" width="12" height="12" fill="#fff" stroke="#505050" stroke-width="1.1"/></svg>
<div class="x" style="left:29px;top:138px;font-size:11px;line-height:11px;color:#484848;letter-spacing:-0.38px">PROGNOSE GKR6-KKW2</div>
<div style="left:227px;top:133px;width:33px;height:16px;border:1px solid #a6c27a;background:#fff"><div class="x" style="left:2px;top:2px;font-size:12px;line-height:12px;color:#404040;letter-spacing:-0.45px">999</div></div>
<div style="left:267px;top:133px;width:33px;height:16px;border:1px solid #a6c27a;background:#fff"><div class="x" style="left:2px;top:2px;font-size:12px;line-height:12px;color:#404040;letter-spacing:-0.45px">999</div></div>
<div style="left:305px;top:132px;width:199px;height:22px;overflow:hidden"><div class="x" style="left:4px;top:6px;font-size:11px;line-height:11px;color:#484848;letter-spacing:0px">006_PROGNOSE_Anteil_KGR6-KKW2.xml</div></div>
<div style="left:0;top:154px;width:505px;height:22px;background:#efefef"></div>
<svg style="left:6px;top:158px" width="13" height="13"><rect x="0.5" y="0.5" width="12" height="12" fill="#fff" stroke="#505050" stroke-width="1.1"/></svg>
<div class="x" style="left:29px;top:160px;font-size:11px;line-height:11px;color:#484848;letter-spacing:-0.38px">PROGNOSE GKR7-KKW2</div>
<div style="left:227px;top:155px;width:33px;height:16px;border:1px solid #a6c27a;background:#fff"><div class="x" style="left:2px;top:2px;font-size:12px;line-height:12px;color:#404040;letter-spacing:-0.45px">999</div></div>
<div style="left:267px;top:155px;width:33px;height:16px;border:1px solid #a6c27a;background:#fff"><div class="x" style="left:2px;top:2px;font-size:12px;line-height:12px;color:#404040;letter-spacing:-0.45px">999</div></div>
<div style="left:305px;top:154px;width:199px;height:22px;overflow:hidden"><div class="x" style="left:4px;top:6px;font-size:11px;line-height:11px;color:#484848;letter-spacing:0px">007_PROGNOSE_Anteil_KGR7-KKW2.xml</div></div>
<div style="left:0;top:176px;width:505px;height:22px;background:#fff"></div>
<svg style="left:6px;top:180px" width="13" height="13"><rect x="0.5" y="0.5" width="12" height="12" fill="#fff" stroke="#505050" stroke-width="1.1"/></svg>
<div class="x" style="left:29px;top:182px;font-size:11px;line-height:11px;color:#484848;letter-spacing:-0.38px">PROGNOSE GKR8-KKW2</div>
<div style="left:227px;top:177px;width:33px;height:16px;border:1px solid #a6c27a;background:#fff"><div class="x" style="left:2px;top:2px;font-size:12px;line-height:12px;color:#404040;letter-spacing:-0.45px">999</div></div>
<div style="left:267px;top:177px;width:33px;height:16px;border:1px solid #a6c27a;background:#fff"><div class="x" style="left:2px;top:2px;font-size:12px;line-height:12px;color:#404040;letter-spacing:-0.45px">999</div></div>
<div style="left:305px;top:176px;width:199px;height:22px;overflow:hidden"><div class="x" style="left:4px;top:6px;font-size:11px;line-height:11px;color:#484848;letter-spacing:0px">008_PROGNOSE_Anteil_KGR8-KKW2.xml</div></div>
<div style="left:0;top:198px;width:505px;height:22px;background:#efefef"></div>
<svg style="left:6px;top:202px" width="13" height="13"><rect x="0.5" y="0.5" width="12" height="12" fill="#fff" stroke="#505050" stroke-width="1.1"/></svg>
<div class="x" style="left:29px;top:204px;font-size:11px;line-height:11px;color:#484848;letter-spacing:-0.1px">PROGNOSE Anteil KGR 0</div>
<div style="left:227px;top:199px;width:33px;height:16px;border:1px solid #a6c27a;background:#fff"><div class="x" style="left:2px;top:2px;font-size:12px;line-height:12px;color:#404040;letter-spacing:-0.45px">999</div></div>
<div style="left:267px;top:199px;width:33px;height:16px;border:1px solid #a6c27a;background:#fff"><div class="x" style="left:2px;top:2px;font-size:12px;line-height:12px;color:#404040;letter-spacing:-0.45px">999</div></div>
<div style="left:305px;top:198px;width:199px;height:22px;overflow:hidden"><div class="x" style="left:4px;top:6px;font-size:11px;line-height:11px;color:#484848;letter-spacing:0px">010_PROGNOSE_Anteil_KGR-0.xml</div></div>
<div style="left:0;top:220px;width:505px;height:22px;background:#fff"></div>
<svg style="left:6px;top:224px" width="13" height="13"><rect x="0.5" y="0.5" width="12" height="12" fill="#fff" stroke="#505050" stroke-width="1.1"/></svg>
<div class="x" style="left:29px;top:226px;font-size:11px;line-height:11px;color:#484848;letter-spacing:-0.1px">PROGNOSE Anteil KGR 1</div>
<div style="left:227px;top:221px;width:33px;height:16px;border:1px solid #a6c27a;background:#fff"><div class="x" style="left:2px;top:2px;font-size:12px;line-height:12px;color:#404040;letter-spacing:-0.45px">999</div></div>
<div style="left:267px;top:221px;width:33px;height:16px;border:1px solid #a6c27a;background:#fff"><div class="x" style="left:2px;top:2px;font-size:12px;line-height:12px;color:#404040;letter-spacing:-0.45px">999</div></div>
<div style="left:305px;top:220px;width:199px;height:22px;overflow:hidden"><div class="x" style="left:4px;top:6px;font-size:11px;line-height:11px;color:#484848;letter-spacing:0px">011_PROGNOSE_Anteil_KGR-1.xml</div></div>
<div style="left:0;top:242px;width:505px;height:22px;background:#efefef"></div>
<svg style="left:6px;top:246px" width="13" height="13"><rect x="0.5" y="0.5" width="12" height="12" fill="#fff" stroke="#505050" stroke-width="1.1"/></svg>
<div class="x" style="left:29px;top:248px;font-size:11px;line-height:11px;color:#484848;letter-spacing:-0.1px">PROGNOSE Anteil KGR 2</div>
<div style="left:227px;top:243px;width:33px;height:16px;border:1px solid #a6c27a;background:#fff"><div class="x" style="left:2px;top:2px;font-size:12px;line-height:12px;color:#404040;letter-spacing:-0.45px">999</div></div>
<div style="left:267px;top:243px;width:33px;height:16px;border:1px solid #a6c27a;background:#fff"><div class="x" style="left:2px;top:2px;font-size:12px;line-height:12px;color:#404040;letter-spacing:-0.45px">999</div></div>
<div style="left:305px;top:242px;width:199px;height:22px;overflow:hidden"><div class="x" style="left:4px;top:6px;font-size:11px;line-height:11px;color:#484848;letter-spacing:0px">012_PROGNOSE_Anteil_KGR-2.xml</div></div>
<div style="left:0;top:264px;width:505px;height:22px;background:#fff"></div>
<svg style="left:6px;top:268px" width="13" height="13"><rect x="0.5" y="0.5" width="12" height="12" fill="#fff" stroke="#505050" stroke-width="1.1"/></svg>
<div class="x" style="left:29px;top:270px;font-size:11px;line-height:11px;color:#484848;letter-spacing:-0.1px">PROGNOSE Anteil KGR 3</div>
<div style="left:227px;top:265px;width:33px;height:16px;border:1px solid #a6c27a;background:#fff"><div class="x" style="left:2px;top:2px;font-size:12px;line-height:12px;color:#404040;letter-spacing:-0.45px">999</div></div>
<div style="left:267px;top:265px;width:33px;height:16px;border:1px solid #a6c27a;background:#fff"><div class="x" style="left:2px;top:2px;font-size:12px;line-height:12px;color:#404040;letter-spacing:-0.45px">999</div></div>
<div style="left:305px;top:264px;width:199px;height:22px;overflow:hidden"><div class="x" style="left:4px;top:6px;font-size:11px;line-height:11px;color:#484848;letter-spacing:0px">013_PROGNOSE_Anteil_KGR-3.xml</div></div>
<div style="left:0;top:286px;width:505px;height:22px;background:#efefef"></div>
<svg style="left:6px;top:290px" width="13" height="13"><rect x="0.5" y="0.5" width="12" height="12" fill="#fff" stroke="#505050" stroke-width="1.1"/></svg>
<div class="x" style="left:29px;top:292px;font-size:11px;line-height:11px;color:#484848;letter-spacing:-0.1px">PROGNOSE Anteil KGR 4</div>
<div style="left:227px;top:287px;width:33px;height:16px;border:1px solid #a6c27a;background:#fff"><div class="x" style="left:2px;top:2px;font-size:12px;line-height:12px;color:#404040;letter-spacing:-0.45px">999</div></div>
<div style="left:267px;top:287px;width:33px;height:16px;border:1px solid #a6c27a;background:#fff"><div class="x" style="left:2px;top:2px;font-size:12px;line-height:12px;color:#404040;letter-spacing:-0.45px">999</div></div>
<div style="left:305px;top:286px;width:199px;height:22px;overflow:hidden"><div class="x" style="left:4px;top:6px;font-size:11px;line-height:11px;color:#484848;letter-spacing:0px">014_PROGNOSE_Anteil_KGR-4.xml</div></div>
</div>
<div style="left:776px;top:468px;width:11px;height:303px;background:#eaeaea;"></div>
<div style="left:804px;top:423px;width:1px;height:349px;background:#a0a0a0;"></div>
<div style="left:295px;top:423px;width:1px;height:348px;background:#a0a0a0;"></div>
<div style="left:495px;top:423px;width:1px;height:348px;background:#a0a0a0;"></div>
<div style="left:535px;top:423px;width:1px;height:348px;background:#a0a0a0;"></div>
<div style="left:575px;top:423px;width:1px;height:348px;background:#a0a0a0;"></div>
<div style="left:775px;top:423px;width:1px;height:348px;background:#a0a0a0;"></div>
<svg style="left:277px;top:428px" width="13" height="13"><rect x="0.5" y="0.5" width="12" height="12" fill="#fff" stroke="#505050" stroke-width="1.1"/></svg>
<div class="x" style="left:359px;top:429px;font-size:11.5px;line-height:11.5px;font-weight:bold;letter-spacing:0.3px;color:#505050;">Timeline</div>
<svg style="left:475px;top:433px" width="12" height="6"><path d="M0 6 L6 0 L12 6 Z" fill="#c0c0c0"/></svg>
<div style="left:300px;top:443px;width:189px;height:18px;border:1px solid #8c8c8c;background:#e6e6e6;overflow:hidden"><div class="x" style="left:4px;top:4px;font-size:10.5px;line-height:10.5px;color:#a8a8a8;letter-spacing:-0.2px">Such/Filtertext...</div></div>
<div style="left:500px;top:426px;width:34px;height:16px;overflow:hidden"></div>
<div class="x" style="left:499px;top:429px;font-size:11.5px;line-height:11.5px;font-weight:bold;color:#505050;">A...</div>
<svg style="left:516px;top:433px" width="12" height="6"><path d="M0 6 L6 0 L12 6 Z" fill="#c0c0c0"/></svg>
<div style="left:500px;top:443px;width:29px;height:18px;border:1px solid #8c8c8c;background:#e6e6e6;overflow:hidden"><div class="x" style="left:4px;top:4px;font-size:10.5px;line-height:10.5px;color:#a8a8a8;letter-spacing:-0.2px">Such</div></div>
<div class="x" style="left:539.5px;top:429px;font-size:11.5px;line-height:11.5px;font-weight:bold;color:#505050;">L...</div>
<svg style="left:556px;top:433px" width="12" height="6"><path d="M0 6 L6 0 L12 6 Z" fill="#c0c0c0"/></svg>
<div style="left:540px;top:443px;width:29px;height:18px;border:1px solid #8c8c8c;background:#e6e6e6;overflow:hidden"><div class="x" style="left:4px;top:4px;font-size:10.5px;line-height:10.5px;color:#a8a8a8;letter-spacing:-0.2px">Such</div></div>
<div class="x" style="left:656.5px;top:429px;font-size:11.5px;line-height:11.5px;font-weight:bold;letter-spacing:0.3px;color:#505050;">ID</div>
<svg style="left:755px;top:433px" width="12" height="6"><path d="M0 6 L6 0 L12 6 Z" fill="#c0c0c0"/></svg>
<div style="left:580px;top:443px;width:189px;height:18px;border:1px solid #8c8c8c;background:#e6e6e6;overflow:hidden"><div class="x" style="left:4px;top:4px;font-size:10.5px;line-height:10.5px;color:#a8a8a8;letter-spacing:-0.2px">Such/Filtertext...</div></div>
<div style="left:788px;top:502px;width:15px;height:15px;background:#c8c8c8;"></div>
<svg style="left:0;top:0" width="806" height="834"><polygon points="795.30,485.20 801.00,490.80 801.00,494.50 795.30,488.90 789.60,494.50 789.60,490.80" fill="#5a5a5a"/></svg>
<svg style="left:0;top:0" width="806" height="834"><polygon points="795.50,754.00 801.20,748.40 801.20,744.70 795.50,750.30 789.80,744.70 789.80,748.40" fill="#5a5a5a"/></svg>
<div style="left:4px;top:773px;width:64px;height:19px;background:#82a62c"></div>
<div class="x" style="left:4px;width:64px;text-align:center;top:777px;font-size:11.5px;line-height:11.5px;color:#fff;letter-spacing:-0.2px">Kopieren</div>
<div style="left:71px;top:773px;width:62px;height:19px;background:#82a62c"></div>
<div class="x" style="left:71px;width:62px;text-align:center;top:777px;font-size:11.5px;line-height:11.5px;color:#fff;letter-spacing:-0.2px">Löschen</div>
<div style="left:136px;top:773px;width:70px;height:19px;background:#82a62c"></div>
<div class="x" style="left:136px;width:70px;text-align:center;top:777px;font-size:11.5px;line-height:11.5px;color:#fff;letter-spacing:-0.2px">Speichern</div>
<div style="left:275px;top:773px;width:525px;height:19px;background:#82a62c"></div>
<div class="x" style="left:275px;width:525px;text-align:center;top:777px;font-size:11.5px;line-height:11.5px;color:#fff;letter-spacing:-0.2px">Timelines bearbeiten</div>
<div style="left:1px;top:799px;width:804px;height:1px;background:#dadada;"></div>
<div style="left:1px;top:800px;width:804px;height:33px;background:#fff;"></div>
<div style="left:2px;top:800px;width:802px;height:32px;background:#f2f2f2;"></div>
<svg style="left:25px;top:810px" width="13" height="13"><rect x="0.5" y="0.5" width="12" height="12" fill="#fff" stroke="#505050" stroke-width="1.1"/></svg>
<div class="x" style="left:47px;top:808px;font-size:12px;line-height:12px;letter-spacing:-0.45px;color:#404040;">Als Standard für dieses Projekt sichern</div>
<div style="left:650px;top:804px;width:60px;height:19px;background:#82a62c"></div>
<div class="x" style="left:650px;width:60px;text-align:center;top:807px;font-size:12px;line-height:12px;color:#fff;letter-spacing:-0.4px">Drucken</div>
<div style="left:714px;top:804px;width:73px;height:19px;background:#6e6e6e"></div>
<div class="x" style="left:714px;width:73px;text-align:center;top:807px;font-size:12px;line-height:12px;color:#fff;letter-spacing:-0.4px">Abbrechen</div>
<div style="left:0;top:0;width:804px;height:832px;border:1px solid #606060;pointer-events:none"></div>
</body></html>
